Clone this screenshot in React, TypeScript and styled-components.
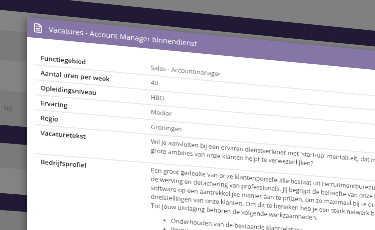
import React, { useMemo } from 'react';
import styled, { createGlobalStyle } from 'styled-components';
import { FileText } from 'lucide-react';

const GlobalStyle = createGlobalStyle`
  html, body {
    margin: 0;
    padding: 0;
    background: #7f7f7f;
    overflow: hidden;
  }
  body {
    width: 375px;
    height: 230px;
    font-family: 'Open Sans', 'Liberation Sans', sans-serif;
  }
`;

type Pt = [number, number];

// the page is laid out flat at 2x, then tilted onto the screenshot
// by mapping the modal's corners onto where they sit in the picture
const FLAT: Pt[] = [[60, 120], [60, 520], [760, 120], [760, 520]];
const SHOT: Pt[] = [[27, 17], [27, 217], [375, 50.8], [375, 242]];

function homography(src: Pt[], dst: Pt[]): number[] {
  const m: number[][] = [];
  src.forEach(([x, y], i) => {
    const [u, v] = dst[i];
    m.push([x, y, 1, 0, 0, 0, -u * x, -u * y, u]);
    m.push([0, 0, 0, x, y, 1, -v * x, -v * y, v]);
  });
  const n = 8;
  for (let c = 0; c < n; c++) {
    let p = c;
    for (let r = c + 1; r < n; r++) if (Math.abs(m[r][c]) > Math.abs(m[p][c])) p = r;
    [m[c], m[p]] = [m[p], m[c]];
    for (let r = 0; r < n; r++) {
      if (r === c) continue;
      const f = m[r][c] / m[c][c];
      for (let k = c; k <= n; k++) m[r][k] -= f * m[c][k];
    }
  }
  return m.map((row, i) => row[n] / row[i]);
}

const Scene = styled.div`
  position: relative;
  width: 820px;
  height: 600px;
  transform-origin: 0 0;
  background: #7f7f7f;
  display: flex;
  flex-direction: column;
`;

const TopBand = styled.div`
  height: 78px;
  background: #808080;
`;

const NavBar = styled.div`
  height: 33px;
  background: #221a35;
`;

const BgRow = styled.div<{ $h: number; $tone: 'light' | 'mid' | 'dark' }>`
  height: ${(p) => p.$h}px;
  display: flex;
  align-items: center;
  padding-left: 16px;
  box-sizing: border-box;
  border-bottom: 1px solid rgba(255, 255, 255, 0.05);
  background: ${(p) =>
    p.$tone === 'dark' ? '#221a35' : p.$tone === 'light' ? '#838383' : '#7a7a7a'};
  color: #4d4d4d;
  font-size: 13px;
`;

const Modal = styled.div`
  position: absolute;
  left: 60px;
  top: 120px;
  width: 760px;
  height: 480px;
  overflow: hidden;
  background: #fff;
  box-shadow: 0 5px 15px rgba(0, 0, 0, 0.5);
`;

const ModalHeader = styled.div`
  height: 40px;
  display: flex;
  align-items: center;
  gap: 11px;
  padding-left: 11px;
  background: #8676a8;
  color: #fff;
  font-size: 14.6px;
  white-space: nowrap;
`;

const ModalBody = styled.div`
  padding: 25px 16px 0;
`;

const Row = styled.div`
  display: grid;
  grid-template-columns: 216px minmax(0, 1fr);

  & + & {
    border-top: 2px solid #e8e8e8;
  }
`;

const Label = styled.div`
  padding: 5px 10px;
  font-size: 13px;
  font-weight: 600;
  line-height: 18px;
  color: #2b2b2b;
  white-space: nowrap;
`;

const Value = styled.div`
  padding: 5px 10px;
  font-size: 12.5px;
  line-height: 18px;
  color: #6a6a6a;
  white-space: nowrap;
`;

const Para = styled.p`
  margin: 0 0 10px;
  color: #555;
`;

const List = styled.ul`
  margin: 0 0 10px;
  padding-left: 40px;
  color: #555;
`;

const details: [string, string][] = [
  ['Functiegebied', 'Sales - Accountmanager'],
  ['Aantal uren per week', '40'],
  ['Opleidingsniveau', 'HBO'],
  ['Ervaring', 'Medior'],
  ['Regio', 'Groningen'],
];

const bgRows: { h: number; tone: 'light' | 'mid' | 'dark'; text?: string }[] = [
  { h: 40, tone: 'light' },
  { h: 60, tone: 'mid' },
  { h: 60, tone: 'light' },
  { h: 70, tone: 'mid', text: 'be' },
  { h: 36, tone: 'dark' },
  { h: 50, tone: 'mid' },
  { h: 50, tone: 'light' },
  { h: 34, tone: 'dark' },
  { h: 90, tone: 'mid' },
];

export default function App() {
  const transform = useMemo(() => {
    const [a, b, c, d, e, f, g, h] = homography(FLAT, SHOT);
    return `matrix3d(${a},${d},0,${g},${b},${e},0,${h},0,0,1,0,${c},${f},0,1)`;
  }, []);

  return (
    <>
      <GlobalStyle />
      <Scene style={{ transform }}>
        <TopBand />
        <NavBar />
        {bgRows.map((r, i) => (
          <BgRow key={i} $h={r.h} $tone={r.tone}>
            {r.text}
          </BgRow>
        ))}
        <Modal>
          <ModalHeader>
            <FileText size={20} strokeWidth={2} />
            Vacatures - Account Manager binnendienst
          </ModalHeader>
          <ModalBody>
            {details.map(([k, v]) => (
              <Row key={k}>
                <Label>{k}</Label>
                <Value>{v}</Value>
              </Row>
            ))}
            <Row>
              <Label>Vacaturetekst</Label>
              <Value>
                <Para>
                  Wil je aansluiten bij een ervaren dienstverlener met 'start-up' mentaliteit, dat met slimme software de
                  <br />
                  grote ambities van onze klanten helpt te verwezenlijken?
                </Para>
              </Value>
            </Row>
            <Row>
              <Label>Bedrijfsprofiel</Label>
              <Value>
                <Para>
                  Een groot gedeelte van onze klantenportefeuille bestaat uit recruitmentbureaus, gespecialiseerd in
                  <br />
                  de werving en detachering van professionals. Jij begrijpt de behoefte van onze klanten en weet onze
                  <br />
                  software op een aantrekkelijke manier aan te prijzen, om zo maximaal bij te dragen aan de
                  <br />
                  doelstellingen van onze klanten. Om dit te bereiken heb je een sterk netwerk binnen de branche.
                  <br />
                  Tot jouw uitdaging behoren de volgende werkzaamheden:
                </Para>
                <List>
                  <li>Onderhouden van de bestaande klantrelaties;</li>
                  <li>Werven van nieuwe klanten;</li>
                </List>
              </Value>
            </Row>
          </ModalBody>
        </Modal>
      </Scene>
    </>
  );
}
